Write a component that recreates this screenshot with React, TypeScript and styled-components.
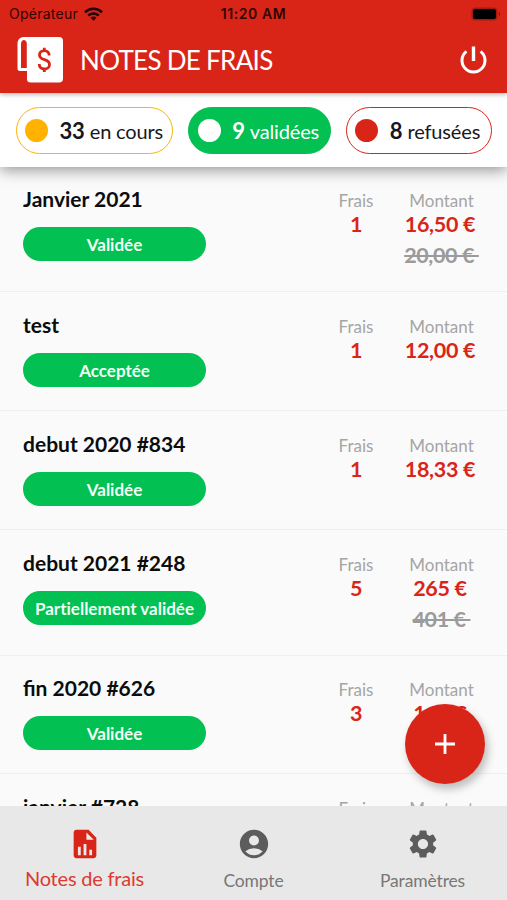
import React from "react";
import styled, { createGlobalStyle } from "styled-components";
import { MdAccountCircle, MdSettings } from "react-icons/md";

const RED = "#d92518";
const GREEN = "#02c052";
const AMBER = "#ffb300";

const GlobalStyle = createGlobalStyle`
  *, *::before, *::after { box-sizing: border-box; }
  body { margin: 0; font-family: Lato, "Open Sans", sans-serif; color: #0c0c0c; }
`;

const Screen = styled.div`
  position: relative;
  display: flex;
  flex-direction: column;
  width: 507px;
  height: 900px;
  overflow: hidden;
  background: #fafafa;
`;

const Header = styled.header`
  flex: none;
  height: 93px;
  background: ${RED};
  box-shadow: 0 1px 5px rgba(0, 0, 0, 0.35);
  z-index: 3;
`;

const StatusBar = styled.div`
  display: grid;
  grid-template-columns: 1fr auto 1fr;
  align-items: center;
  height: 27px;
  padding: 0 6px 0 9px;
  font-family: Inter, "Liberation Sans", sans-serif;
  font-size: 14px;
  color: #300503;
`;

const Carrier = styled.div`
  display: flex;
  align-items: center;
  gap: 6px;
  letter-spacing: 0.25px;
`;

const Clock = styled.div`
  margin-right: 3px;
  font-weight: 600;
  letter-spacing: 0.55px;
`;

const Battery = styled.svg`
  justify-self: end;
`;

const TitleBar = styled.div`
  display: flex;
  align-items: center;
  height: 66px;
  padding: 0 16px 0 17px;
  color: #fff;
`;

const Title = styled.h1`
  flex: 1;
  margin: 0 0 0 17px;
  font-size: 26px;
  line-height: 32px;
  font-weight: 400;
  letter-spacing: -0.7px;
`;

const PowerButton = styled.button`
  display: flex;
  padding: 0;
  border: 0;
  background: none;
  color: #fff;
`;

const Filters = styled.div`
  flex: none;
  display: flex;
  gap: 15px;
  height: 74px;
  padding: 14px 15px 0 15.5px;
  background: #fff;
  box-shadow: 0 3px 14px rgba(0, 0, 0, 0.42);
  z-index: 2;
`;

const Chip = styled.button<{ $width: number; $color: string; $active?: boolean }>`
  display: flex;
  align-items: center;
  width: ${(p) => p.$width}px;
  height: 47px;
  padding: 0 0 0 8.5px;
  border: 1.5px solid ${(p) => p.$color};
  border-radius: 24px;
  background: ${(p) => (p.$active ? p.$color : "#fff")};
  color: ${(p) => (p.$active ? "#fff" : "#17171c")};
  font-family: inherit;
  font-size: 20px;
  letter-spacing: -0.15px;
  white-space: nowrap;
`;

const Dot = styled.span<{ $color: string }>`
  flex: none;
  width: 23px;
  height: 23px;
  margin-right: 11.5px;
  border-radius: 50%;
  background: ${(p) => p.$color};
`;

const Count = styled.strong`
  margin-right: 5px;
  font-size: 22px;
  font-weight: 700;
`;

const List = styled.main`
  flex: 1;
  min-height: 0;
  overflow: hidden;
`;

const Row = styled.article<{ $height: number }>`
  display: grid;
  grid-template-columns: 1fr 86px 85px;
  height: ${(p) => p.$height}px;
  padding: 19.5px 23px 0;
  border-bottom: 1px solid #efefef;
`;

const RowTitle = styled.h2`
  margin: 0 0 15px;
  font-size: 21px;
  line-height: 26px;
  font-weight: 700;
`;

const Badge = styled.div`
  width: 183px;
  height: 34px;
  border-radius: 17px;
  background: ${GREEN};
  color: #f2fff4;
  text-align: center;
  font-size: 17px;
  line-height: 35px;
  font-weight: 700;
  font-variant-ligatures: none;
`;

const Figure = styled.div`
  display: flex;
  flex-direction: column;
  align-items: center;
  padding-top: 3px;
`;

const Label = styled.span`
  font-size: 17px;
  line-height: 23px;
  color: #a5a5a5;
`;

const Value = styled.span<{ $offset?: number }>`
  margin-right: ${(p) => p.$offset ?? 0}px;
  font-size: 21.5px;
  line-height: 25px;
  font-weight: 700;
  letter-spacing: -0.3px;
  color: ${RED};
  white-space: nowrap;
`;

const OldValue = styled.s`
  margin-top: 5px;
  font-size: 21.5px;
  line-height: 26px;
  font-weight: 700;
  letter-spacing: -0.4px;
  color: #9b9b9b;
  text-decoration-thickness: 1.5px;
  white-space: pre;
`;

const AddButton = styled.button`
  position: absolute;
  left: 405px;
  top: 704px;
  z-index: 3;
  display: flex;
  align-items: center;
  justify-content: center;
  width: 80px;
  height: 80px;
  padding: 0;
  border: 0;
  border-radius: 50%;
  background: ${RED};
  box-shadow: 3px 5px 8px rgba(0, 0, 0, 0.25);
`;

const TabBar = styled.nav`
  flex: none;
  display: grid;
  grid-template-columns: repeat(3, 1fr);
  height: 94px;
  background: #e8e8e8;
  z-index: 2;
`;

const Tab = styled.button`
  display: flex;
  flex-direction: column;
  align-items: center;
  padding: 21px 0 0;
  border: 0;
  background: none;
  color: #5c5c5c;
  font-family: inherit;
`;

const ActiveTab = styled(Tab)`
  color: ${RED};
`;

const TabLabel = styled.span<{ $active?: boolean }>`
  margin-top: ${(p) => (p.$active ? 5 : 8)}px;
  font-size: ${(p) => (p.$active ? 20 : 17.5)}px;
  line-height: 24px;
  letter-spacing: ${(p) => (p.$active ? -0.2 : -0.15)}px;
  color: ${(p) => (p.$active ? "#dc3b30" : "#777")};
`;

const Wifi = () => (
  <svg width="19" height="14" viewBox="0 0 19 14" fill="none" stroke="#250302" strokeWidth="2.6">
    <path d="M1 5.2C5.8.6 13.2.6 18 5.2" />
    <path d="M4.2 8.6c3-2.8 7.600-2.800 10.600 0" />
    <path d="M6.600 10.700c1.700-1.500 4.100-1.500 5.800 0L9.500 13.700z" fill="#250302" stroke="none" />
  </svg>
);

const LedgerIcon = () => (
  <svg width="46" height="46" viewBox="0 0 46 46" fill="none">
    <path d="M6.500 0H42a4 4 0 0 1 4 4V41.500a4 4 0 0 1-4 4H13.500a3.500 3.500 0 0 1-3.500-3.500V34H3a2.500 2.500 0 0 1-2.500-2.500V6a6 6 0 0 1 6-6z" fill="#fff" />
    <path d="M4 6.800c0-5.200 5.800-5.200 5.800 0V31H4z" fill={RED} />
    <path d="M32.200 18.400c0-2.900-2-4.700-4.900-4.700-2.800 0-4.800 1.700-4.800 4.200 0 6.200 10 3.300 10 9.500 0 2.800-2.100 4.600-5.100 4.600-3.100 0-5.200-1.900-5.200-4.900M27.300 10.800v3M27.300 32v3" stroke={RED} strokeWidth="2.800" />
  </svg>
);

const PowerIcon = () => (
  <svg width="35" height="35" viewBox="0 0 35 35" fill="none" stroke="currentColor" strokeWidth="3">
    <path d="M17.500 3.500V18" strokeWidth="3.400" />
    <path d="M10.400 8.400a11.500 11.500 0 1 0 14.200 0" />
  </svg>
);

const ReportIcon = () => (
  <svg width="34" height="34" viewBox="0 0 24 24" fill="currentColor">
    <path fillRule="evenodd" d="M6 2h8.500L20 7.500V20a2 2 0 0 1-2 2H6a2 2 0 0 1-2-2V4c0-1.100.9-2 2-2zM13 3.800V9h5.200zM7 14v6h2v-6zM11 12v8h2v-8zM15 16v4h2v-4z" />
  </svg>
);

type Report = {
  title: string;
  status: string;
  count: number;
  amount: string;
  claimed?: string;
  height: number;
};

const reports: Report[] = [
  { title: "Janvier 2021", status: "Validée", count: 1, amount: "16,50 €", claimed: "20,00 € ", height: 126 },
  { title: "test", status: "Acceptée", count: 1, amount: "12,00 €", height: 119 },
  { title: "debut 2020 #834", status: "Validée", count: 1, amount: "18,33 €", height: 119 },
  { title: "debut 2021 #248", status: "Partiellement validée", count: 5, amount: "265 €", claimed: "401 € ", height: 125.3 },
  { title: "fin 2020 #626", status: "Validée", count: 3, amount: "145 €", height: 118.7 },
  { title: "janvier #728", status: "Validée", count: 2, amount: "120 €", height: 119.3 },
];

const Rows = styled.div`
  margin-top: -0.7px;
`;

const ReportRow = ({ report }: { report: Report }) => (
  <Row $height={report.height}>
    <div>
      <RowTitle>{report.title}</RowTitle>
      <Badge>{report.status}</Badge>
    </div>
    <Figure>
      <Label>Frais</Label>
      <Value>{report.count}</Value>
    </Figure>
    <Figure>
      <Label>Montant</Label>
      <Value $offset={3}>{report.amount}</Value>
      {report.claimed && <OldValue>{report.claimed}</OldValue>}
    </Figure>
  </Row>
);

export default function App() {
  return (
    <>
      <GlobalStyle />
      <Screen>
        <Header>
          <StatusBar>
            <Carrier>
              Opérateur
              <Wifi />
            </Carrier>
            <Clock>11:20 AM</Clock>
            <Battery width="30" height="14" viewBox="0 0 30 14">
              <rect x="0.500" y="0.500" width="26" height="13" rx="4" fill="#a31b11" />
              <rect x="2" y="2" width="23" height="10" rx="2.500" fill="#000" />
              <path d="M28 5v4c1.300-.5 1.300-3.500 0-4z" fill="#700f0a" />
            </Battery>
          </StatusBar>
          <TitleBar>
            <LedgerIcon />
            <Title>NOTES DE FRAIS</Title>
            <PowerButton aria-label="Déconnexion">
              <PowerIcon />
            </PowerButton>
          </TitleBar>
        </Header>
        <Filters>
          <Chip $width={158} $color={AMBER}>
            <Dot $color={AMBER} />
            <Count>33</Count>en cours
          </Chip>
          <Chip $width={143} $color={GREEN} $active>
            <Dot $color="#fff" />
            <Count>9</Count>validées
          </Chip>
          <Chip $width={146.5} $color={RED}>
            <Dot $color={RED} />
            <Count>8</Count>refusées
          </Chip>
        </Filters>
        <List>
          <Rows>
            {reports.map((report) => (
              <ReportRow key={report.title} report={report} />
            ))}
          </Rows>
        </List>
        <AddButton aria-label="Ajouter">
          <svg width="20" height="20" viewBox="0 0 20 20" stroke="#fff" strokeWidth="2.800">
            <path d="M10 0v20M0 10h20" />
          </svg>
        </AddButton>
        <TabBar>
          <ActiveTab>
            <ReportIcon />
            <TabLabel $active>Notes de frais</TabLabel>
          </ActiveTab>
          <Tab>
            <MdAccountCircle size={34} />
            <TabLabel>Compte</TabLabel>
          </Tab>
          <Tab>
            <MdSettings size={34} />
            <TabLabel>Paramètres</TabLabel>
          </Tab>
        </TabBar>
      </Screen>
    </>
  );
}
